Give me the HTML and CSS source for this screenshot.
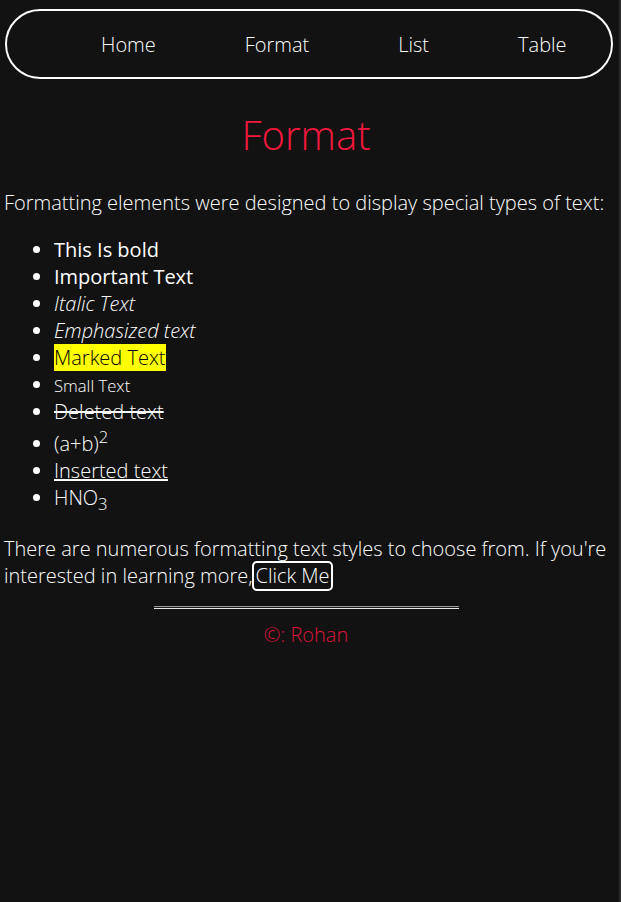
FILE: index.html
```html
<!DOCTYPE html>
<html lang="en">
<head>
<meta charset="utf-8">
<title>Format</title>
<link rel="stylesheet" href="styles.css">
</head>
<body>
<nav class="navbar">
  <ul class="nav-list">
    <li><a href="#">Home</a></li>
    <li><a href="#">Format</a></li>
    <li><a href="#">List</a></li>
    <li><a href="#">Table</a></li>
  </ul>
</nav>
<main class="content">
  <h1 class="title">Format</h1>
  <p>Formatting elements were designed to display special types of text:</p>
  <ul class="format-list">
    <li><b>This Is bold</b></li>
    <li><strong>Important Text</strong></li>
    <li><i>Italic Text</i></li>
    <li><em>Emphasized text</em></li>
    <li><mark>Marked Text</mark></li>
    <li><small>Small Text</small></li>
    <li><del>Deleted text</del></li>
    <li>(a+b)<sup>2</sup></li>
    <li><ins>Inserted text</ins></li>
    <li>HNO<sub>3</sub></li>
  </ul>
  <p class="closing">There are numerous formatting text styles to choose from. If you're interested in learning more,<button class="btn">Click Me</button></p>
  <hr class="divider">
  <footer class="footer">&copy;: Rohan</footer>
</main>
</body>
</html>
```

FILE: styles.css
```css
html {
  background: #121212;
}
body {
  margin: 0;
  background: #121212;
  color: #ffffff;
  font-family: "Open Sans", sans-serif;
  font-weight: 300;
  font-size: 20px;
  min-height: 902px;
  box-shadow: inset -2px 0 0 #2a2a2a;
}
.navbar {
  margin: 9px 8px 0 5px;
  height: 70px;
  box-sizing: border-box;
  border: 2px solid #ffffff;
  border-radius: 35px;
  display: flex;
  align-items: center;
}
.nav-list {
  list-style: none;
  margin: 0;
  padding: 0 0 0 94px;
  display: flex;
  gap: 89px;
}
.nav-list a {
  color: #ffffff;
  text-decoration: none;
}
.content {
  padding: 0 4px;
  width: 604px;
}
.title {
  color: #f5173f;
  font-weight: 300;
  font-size: 40px;
  text-align: center;
  margin: 28px 0 27px;
}
.format-list {
  padding-left: 50px;
}
.format-list b,
.format-list strong {
  font-weight: 480;
}
mark {
  background: #ffff00;
  color: #000;
}
.closing {
  margin-bottom: 17px;
}
.btn {
  font: inherit;
  line-height: 26px;
  color: #ffffff;
  background: transparent;
  border: 2px solid #ffffff;
  border-radius: 5px;
  padding: 0 1px;
  vertical-align: top;
  margin: -1px 0 -2px;
}
.divider {
  width: 305px;
  height: 1px;
  margin: 0 auto 12px;
  border: 0;
  border-top: 1px solid #9a9a9a;
  border-bottom: 1px solid #e8e8e8;
  background: #1c1c1c;
}
.footer {
  text-align: center;
  color: #dc143c;
}
```
